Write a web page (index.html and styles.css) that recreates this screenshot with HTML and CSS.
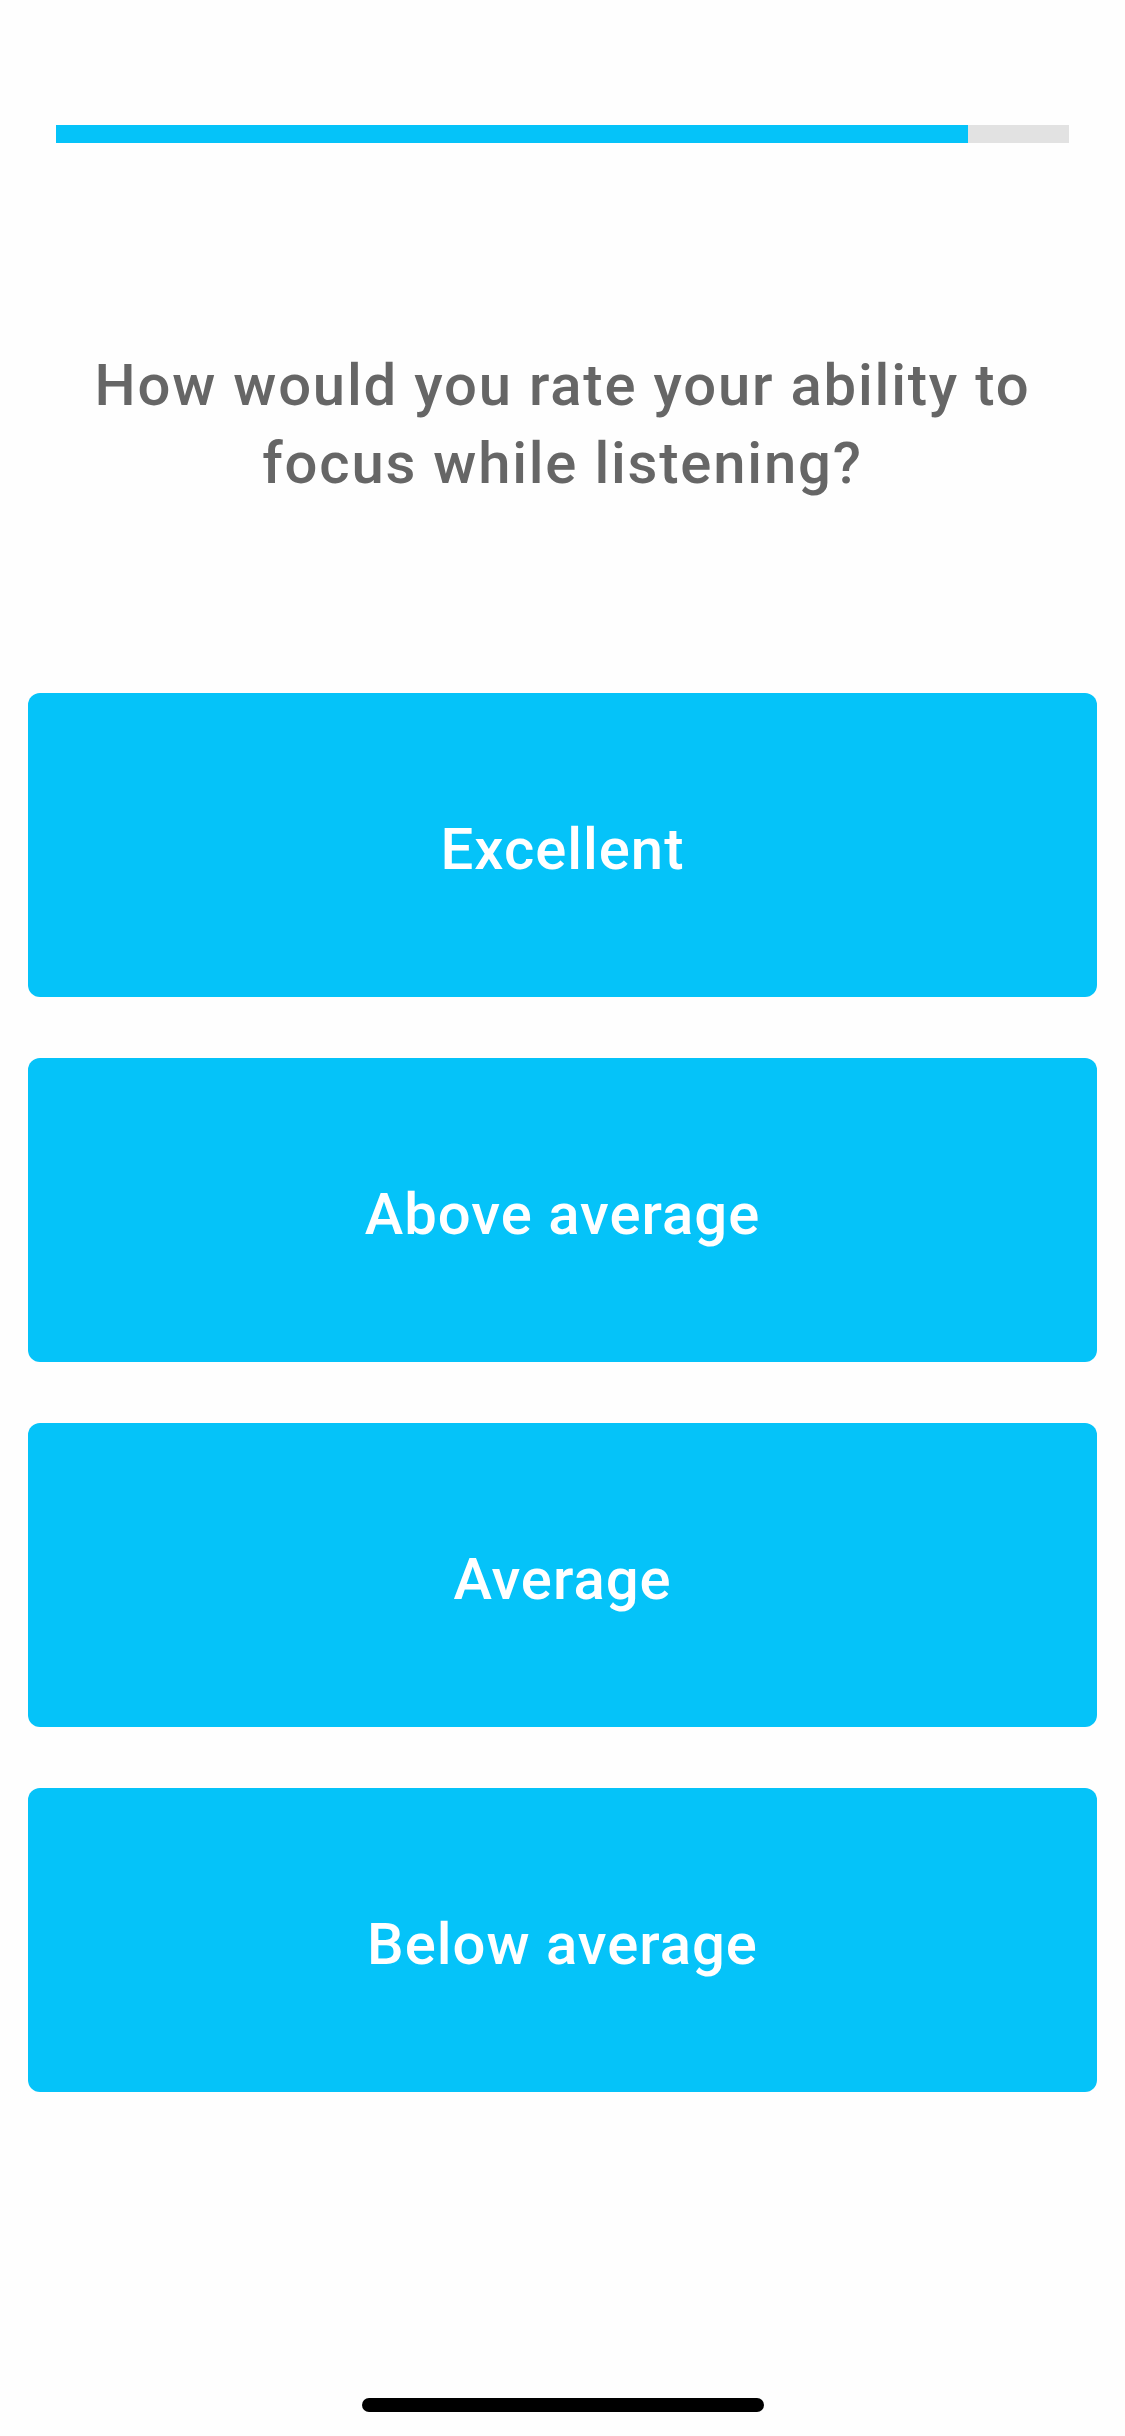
FILE: index.html
```html
<!DOCTYPE html>
<html>
<head>
    <title>Focus Survey</title>
    <link rel="stylesheet" href="styles.css">
</head>
<body>
    <div class="screen">
        <div class="progress">
            <div class="progress-fill" style="width: 90%"></div>
        </div>
        <h1 class="question">How would you rate your ability to focus while listening?</h1>
        <div class="answers">
            <button class="answer">Excellent</button>
            <button class="answer">Above average</button>
            <button class="answer">Average</button>
            <button class="answer">Below average</button>
        </div>
        <div class="home-bar"></div>
    </div>
</body>
</html>
```

FILE: styles.css
```css
body {
    margin: 0;
    background-color: #fefefe;
    font-family: Roboto, "Noto Sans", sans-serif;
}
.screen {
    height: 2436px;
    display: flex;
    flex-direction: column;
}
.progress {
    margin: 125px 56px 0 56px;
    height: 18px;
    background-color: #e2e2e2;
}
.progress-fill {
    height: 100%;
    background-color: #05c3f9;
}
.question {
    margin: 203px 60px 0 60px;
    font-size: 58px;
    font-weight: 500;
    line-height: 78px;
    letter-spacing: 1.8px;
    color: #666666;
    text-align: center;
}
.answers {
    margin: 191px 28px 0 28px;
    display: flex;
    flex-direction: column;
    gap: 61px;
}
.answer {
    height: 304px;
    padding-top: 8px;
    border: none;
    border-radius: 12px;
    background-color: #05c3f9;
    color: white;
    font-family: inherit;
    font-size: 58px;
    font-weight: 500;
    letter-spacing: 1px;
    cursor: pointer;
}
.home-bar {
    margin: auto auto 24px auto;
    width: 402px;
    height: 14px;
    border-radius: 7px;
    background-color: #000;
}
```
